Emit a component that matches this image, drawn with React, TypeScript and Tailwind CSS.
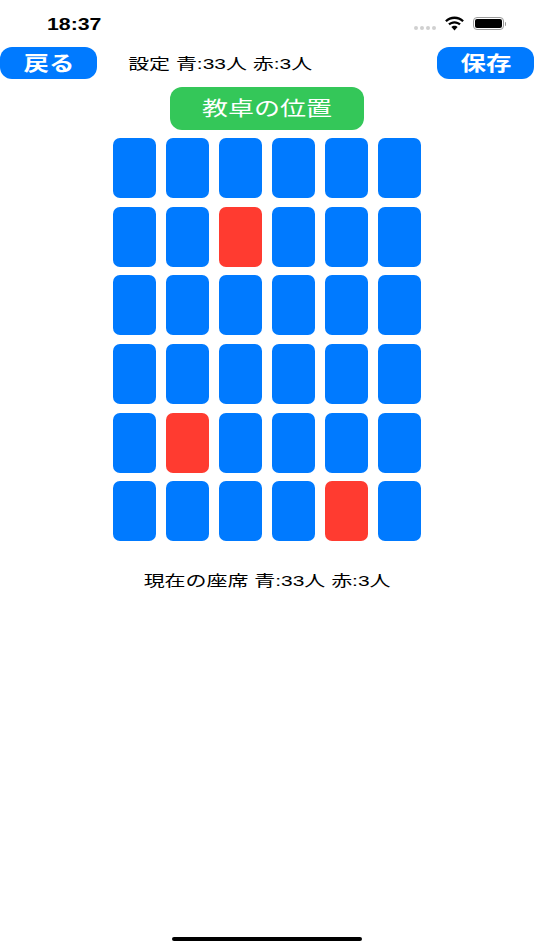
const FONT = "font-['Liberation_Sans','Noto_Sans_CJK_JP',sans-serif]";

const RED_SEATS = [8, 25, 34];
const seats = Array.from({ length: 36 }, (_, i) => i);

function Stretched({ className, children }: { className: string; children: React.ReactNode }) {
  // The screenshot is an iPhone page stretched sideways, so the text is too.
  return <span className={`inline-block whitespace-pre ${className}`}>{children}</span>;
}

function WifiIcon() {
  return (
    <svg width="21" height="15" viewBox="0 0 21 15" fill="#000">
      <path d="M10.5 3.1c3 0 5.7 1.1 7.8 3l1.6-1.7C17.400 2 14.100.600 10.500.600S3.600 2 1.100 4.400l1.600 1.700c2.100-1.900 4.800-3 7.800-3z" />
      <path d="M10.500 7.500c1.800 0 3.400.7 4.700 1.800l1.600-1.700c-1.700-1.500-3.900-2.400-6.300-2.400s-4.600.9-6.300 2.400l1.600 1.700c1.300-1.100 2.900-1.800 4.700-1.800z" />
      <path d="M10.500 9.800c-1.200 0-2.300.5-3.100 1.200l3.100 3.400 3.100-3.400c-.8-.7-1.900-1.200-3.100-1.200z" />
    </svg>
  );
}

function Battery() {
  return (
    <div className="flex items-center gap-[1px]">
      <div className="flex h-[13px] w-[31px] rounded-[4px] border border-[#9a9a9a] p-[1px]">
        <div className="flex-1 rounded-[2px] bg-black" />
      </div>
      <div className="h-[4px] w-[1.500px] rounded-r-sm bg-[#9a9a9a]" />
    </div>
  );
}

function NavButton({ label }: { label: string }) {
  return (
    <button className="flex h-[32px] w-[97px] items-center justify-center rounded-[12px] bg-[#007aff] text-white">
      <Stretched className="scale-x-[1.27] pt-[1px] text-[20px] font-bold">{label}</Stretched>
    </button>
  );
}

export default function App() {
  return (
    <div className={`relative flex h-[950px] w-[534px] flex-col items-center overflow-hidden bg-white text-black ${FONT}`}>
      <div className="flex h-[47px] w-full items-start justify-between pl-[47px] pr-[28px] pt-[15px]">
        <Stretched className="origin-left scale-x-[1.33] text-[16px] leading-[20px] font-bold">18:37</Stretched>
        <div className="flex items-center gap-[8px] pt-[1px]">
          <div className="mt-[8px] flex gap-[2px]">
            {[0, 1, 2, 3].map((d) => (
              <div key={d} className="h-[4px] w-[4px] rounded-full bg-[#d0d0d0]" />
            ))}
          </div>
          <WifiIcon />
          <Battery />
        </div>
      </div>

      <div className="flex h-[32px] w-full items-center">
        <NavButton label="戻る" />
        <Stretched className="ml-[56px] scale-x-[1.37] pt-[3px] text-[15.300px]">設定 青:33人 赤:3人</Stretched>
        <div className="ml-auto">
          <NavButton label="保存" />
        </div>
      </div>

      <button className="mt-[8px] flex h-[43px] w-[194px] items-center justify-center rounded-[12px] bg-[#34c759] text-white">
        <Stretched className="scale-x-[1.3] pt-[1px] text-[20px]">教卓の位置</Stretched>
      </button>

      <div className="mt-[8px] grid grid-cols-[repeat(6,43px)] grid-rows-[repeat(6,60px)] gap-x-[10px] gap-y-[8.700px]">
        {seats.map((i) => (
          <div key={i} className={`rounded-[7px] ${RED_SEATS.includes(i) ? 'bg-[#ff3b30]' : 'bg-[#007aff]'}`} />
        ))}
      </div>

      <div className="mt-[29px] flex h-[20px] items-center">
        <Stretched className="scale-x-[1.37] pt-[3px] text-[15.300px]">現在の座席 青:33人 赤:3人</Stretched>
      </div>

      <div className="absolute bottom-[9px] left-[172px] h-[4px] w-[190px] rounded-full bg-black" />
    </div>
  );
}
